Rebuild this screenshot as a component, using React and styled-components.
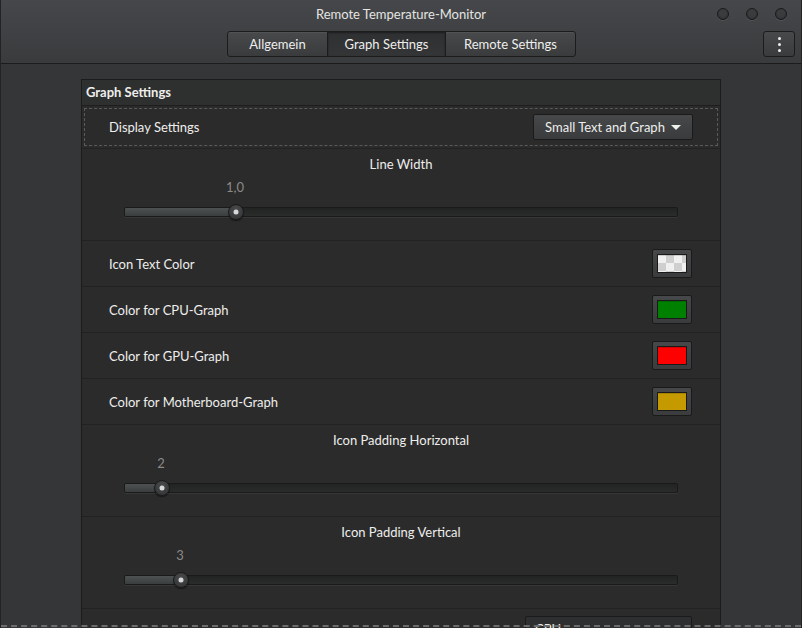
import styled, { createGlobalStyle } from "styled-components";

const GlobalStyle = createGlobalStyle`
  html, body {
    margin: 0;
    padding: 0;
    background: #353637;
  }
  * {
    box-sizing: border-box;
  }
`;

const Window = styled.div`
  position: relative;
  width: 802px;
  height: 628px;
  overflow: hidden;
  background: #353637;
  border-left: 1px solid #232323;
  border-right: 1px solid #232323;
  font-family: "Lato", "Liberation Sans", sans-serif;
  font-size: 13px;
  color: #eeeeec;
`;

const HeaderBar = styled.header`
  height: 64px;
  background: linear-gradient(#45474a, #393b3d);
  border-bottom: 1px solid #1c1c1c;
  display: grid;
  grid-template-rows: 29px 26px;
  padding-top: 2px;
  position: relative;
`;

const Title = styled.div`
  text-align: center;
  line-height: 24px;
  color: #e4e4e2;
`;

const TabRow = styled.div`
  display: flex;
  justify-content: center;
  margin-left: 2px;
`;

const Tab = styled.button`
  height: 26px;
  padding: 0;
  width: ${({ $w }) => $w}px;
  font: inherit;
  color: #eeeeec;
  border: 1px solid #1c1c1c;
  margin-left: -1px;
  background: ${({ $active }) =>
    $active
      ? "linear-gradient(#2f3032, #343537)"
      : "linear-gradient(#47494b, #393b3d)"};
  box-shadow: ${({ $active }) =>
    $active ? "inset 0 1px 2px rgba(0,0,0,0.4)" : "inset 0 1px 0 rgba(255,255,255,0.06)"};
  &:first-child {
    border-radius: 3px 0 0 3px;
  }
  &:last-child {
    border-radius: 0 3px 3px 0;
  }
`;

const WindowControls = styled.div`
  position: absolute;
  top: 8px;
  right: 14px;
  display: flex;
  gap: 17px;
`;

const Dot = styled.span`
  width: 12px;
  height: 12px;
  border-radius: 50%;
  background: radial-gradient(circle at 50% 40%, #3a3c3e 40%, #2a2b2d 100%);
  border: 1px solid #1a1a1a;
  box-shadow: 0 1px 0 rgba(255,255,255,0.08);
`;

const MenuButton = styled.button`
  position: absolute;
  top: 31px;
  right: 6px;
  width: 32px;
  height: 26px;
  padding: 0;
  border: 1px solid #1c1c1c;
  border-radius: 3px;
  background: linear-gradient(#47494b, #393b3d);
  display: flex;
  flex-direction: column;
  align-items: center;
  justify-content: center;
  gap: 3px;
  span {
    width: 3px;
    height: 3px;
    border-radius: 50%;
    background: #eeeeec;
  }
`;

const Body = styled.main`
  padding: 15px 80px 0 80px;
`;

const Frame = styled.section`
  border: 1px solid #1c1c1c;
  background: #2b2b2b;
`;

const FrameTitle = styled.div`
  height: 26px;
  line-height: 24px;
  padding-left: 4px;
  font-weight: bold;
  background: #2e2f2f;
  border-bottom: 1px solid #1e1e1e;
`;

const Row = styled.div`
  height: 46px;
  display: flex;
  align-items: center;
  justify-content: space-between;
  padding: 0 28px 0 27px;
  border-bottom: 1px solid #222222;
`;

const DashedRow = styled.div`
  height: 43px;
  padding: 2px;
  border-bottom: 1px solid #222222;
`;

const DashedBox = styled.div`
  height: 100%;
  border: 1px dashed #5a5a5a;
  display: flex;
  align-items: center;
  justify-content: space-between;
  padding: 0 24px 0 24px;
`;

const Dropdown = styled.button`
  width: 160px;
  height: 26px;
  font: inherit;
  color: #eeeeec;
  border: 1px solid #1a1a1a;
  border-radius: 2px;
  background: linear-gradient(#46484a, #393b3d);
  display: flex;
  align-items: center;
  justify-content: center;
  gap: 6px;
  padding: 0;
`;

const Caret = styled.span`
  width: 0;
  height: 0;
  border-left: 5px solid transparent;
  border-right: 5px solid transparent;
  border-top: 5px solid #eeeeec;
`;

const SliderSection = styled.div`
  height: 92px;
  border-bottom: 1px solid #222222;
  display: flex;
  flex-direction: column;
  padding: 5px 42px 0 42px;
`;

const SliderLabel = styled.div`
  text-align: center;
  line-height: 20px;
`;

const ValueWrap = styled.div`
  position: relative;
  height: 33px;
`;

const SliderValue = styled.span`
  position: absolute;
  top: 3px;
  transform: translateX(-50%);
  color: #8a8a88;
  line-height: 20px;
`;

const Track = styled.div`
  position: relative;
  height: 10px;
  border: 1px solid #1a1a1a;
  border-radius: 2px;
  background: linear-gradient(#222424, #2a2c2c);
  box-shadow: 0 1px 0 rgba(255,255,255,0.06);
`;

const Fill = styled.div`
  height: 100%;
  background: linear-gradient(#4e5252, #3b3e3e);
  border-radius: 1px 0 0 1px;
`;

const Knob = styled.div`
  position: absolute;
  top: 50%;
  width: 16px;
  height: 16px;
  border-radius: 50%;
  transform: translate(-50%, -50%);
  background: radial-gradient(circle at 50% 35%, #4a4c4e, #2e3032);
  border: 1px solid #1a1a1a;
  box-shadow: 0 1px 1px rgba(0,0,0,0.5);
  &::after {
    content: "";
    position: absolute;
    left: 50%;
    top: 50%;
    width: 5px;
    height: 5px;
    border-radius: 50%;
    background: #d8d8d8;
    transform: translate(-50%, -50%);
  }
`;

const Swatch = styled.button`
  width: 40px;
  height: 29px;
  padding: 4px;
  border: 1px solid #1a1a1a;
  border-radius: 2px;
  background: linear-gradient(#46484a, #393b3d);
  display: flex;
`;

const SwatchFill = styled.span`
  flex: 1;
  border: 1px solid #1a1a1a;
  background: ${({ $color }) => $color};
  box-shadow: inset 0 1px 0 rgba(0,0,0,0.15);
`;

const Checker = styled(SwatchFill)`
  background-color: #f0f0f0;
  background-image: linear-gradient(45deg, #cfcfcf 25%, transparent 25%, transparent 75%, #cfcfcf 75%),
    linear-gradient(45deg, #cfcfcf 25%, transparent 25%, transparent 75%, #cfcfcf 75%);
  background-size: 16px 16px;
  background-position: 0 0, 8px 8px;
`;

const LastRow = styled.div`
  display: flex;
  justify-content: space-between;
  padding: 7px 28px 0 27px;
  height: 46px;
`;

const ShortLabel = styled.span`
  margin-top: 9px;
`;

const Input = styled.div`
  width: 167px;
  height: 32px;
  border: 1px solid #1a1a1a;
  border-radius: 2px;
  background: #2e2f30;
  padding: 4px 9px;
`;

const DashedEdge = styled.div`
  position: absolute;
  left: 0;
  right: 0;
  bottom: 1px;
  height: 0;
  border-top: 2px dashed #6c6c6c;
`;

const Slider = ({ label, value, pos }) => (
  <SliderSection>
    <SliderLabel>{label}</SliderLabel>
    <ValueWrap>
      <SliderValue style={{ left: pos }}>{value}</SliderValue>
    </ValueWrap>
    <Track>
      <Fill style={{ width: pos }} />
      <Knob style={{ left: pos }} />
    </Track>
  </SliderSection>
);

export default function App() {
  return (
    <Window>
      <GlobalStyle />
      <HeaderBar>
        <Title>Remote Temperature-Monitor</Title>
        <TabRow>
          <Tab $w={101}>Allgemein</Tab>
          <Tab $w={119} $active>
            Graph Settings
          </Tab>
          <Tab $w={131}>Remote Settings</Tab>
        </TabRow>
        <WindowControls>
          <Dot />
          <Dot />
          <Dot />
        </WindowControls>
        <MenuButton>
          <span />
          <span />
          <span />
        </MenuButton>
      </HeaderBar>
      <Body>
        <Frame>
          <FrameTitle>Graph Settings</FrameTitle>
          <DashedRow>
            <DashedBox>
              <span>Display Settings</span>
              <Dropdown>
                Small Text and Graph <Caret />
              </Dropdown>
            </DashedBox>
          </DashedRow>
          <Slider label="Line Width" value="1,0" pos={111} />
          <Row>
            <span>Icon Text Color</span>
            <Swatch>
              <Checker />
            </Swatch>
          </Row>
          <Row>
            <span>Color for CPU-Graph</span>
            <Swatch>
              <SwatchFill $color="#008000" />
            </Swatch>
          </Row>
          <Row>
            <span>Color for GPU-Graph</span>
            <Swatch>
              <SwatchFill $color="#ff0000" />
            </Swatch>
          </Row>
          <Row>
            <span>Color for Motherboard-Graph</span>
            <Swatch>
              <SwatchFill $color="#c49a00" />
            </Swatch>
          </Row>
          <Slider label="Icon Padding Horizontal" value="2" pos={37} />
          <Slider label="Icon Padding Vertical" value="3" pos={56} />
          <LastRow>
            <ShortLabel>Shortname for CPU</ShortLabel>
            <Input>CPU</Input>
          </LastRow>
        </Frame>
      </Body>
      <DashedEdge />
    </Window>
  );
}
